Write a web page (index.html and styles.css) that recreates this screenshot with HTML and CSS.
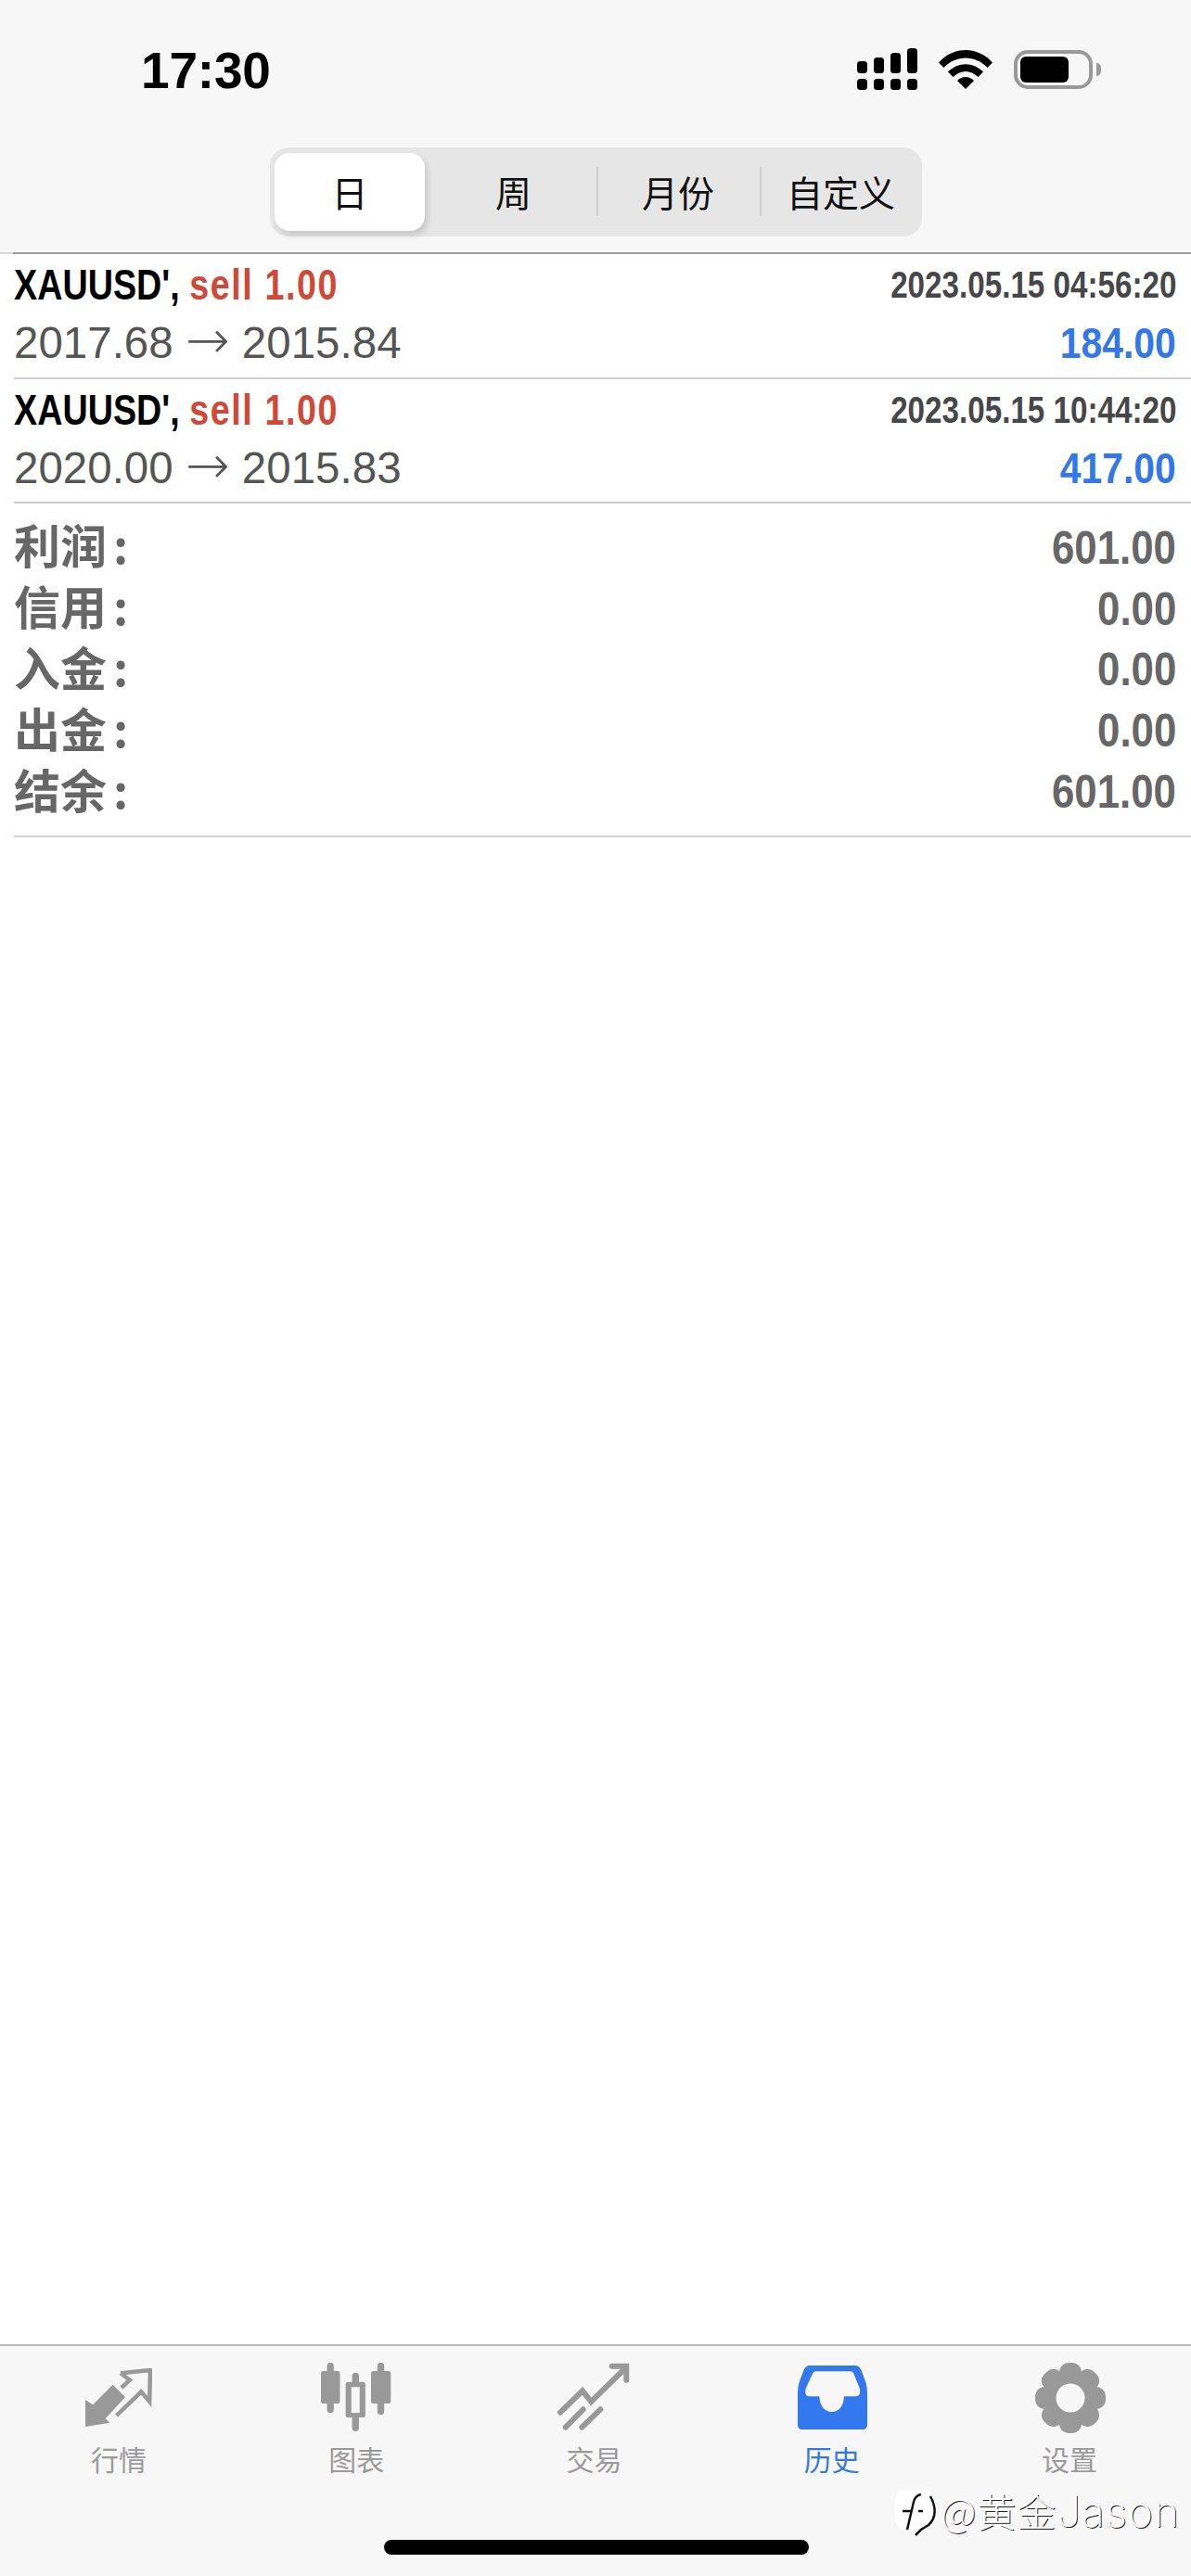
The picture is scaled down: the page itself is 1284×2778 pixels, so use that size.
FILE: index.html
```html
<!DOCTYPE html>
<html lang="zh-CN">
<head>
<meta charset="utf-8">
<title>历史</title>
<link rel="stylesheet" href="styles.css">
</head>
<body>
<div class="screen">
  <header class="top">
    <div class="status">
      <span class="clock">17:30</span>
      <div class="status-icons">
        <svg class="sig" width="66" height="46" viewBox="0 0 66 46">
          <g fill="#000">
            <rect x="0" y="14" width="11" height="13" rx="3.5"/>
            <rect x="18" y="10" width="11" height="17" rx="3.5"/>
            <rect x="36" y="5" width="11" height="22" rx="3.5"/>
            <rect x="54" y="0" width="11" height="27" rx="3.5"/>
            <rect x="0" y="33" width="11" height="12" rx="3.5"/>
            <rect x="18" y="33" width="11" height="12" rx="3.5"/>
            <rect x="36" y="33" width="11" height="12" rx="3.5"/>
            <rect x="54" y="33" width="11" height="12" rx="3.5"/>
          </g>
        </svg>
        <svg class="wifi" width="58" height="42" viewBox="0 0 58 42">
          <path d="M0 13.500C16-4.500 42-4.500 58 13.500L52.500 19C39.500 5 18.500 5 5.500 19Z"/>
          <path d="M10 23.500C21 12.500 37 12.500 48 23.500L42.500 29C34 21 24 21 15.500 29Z"/>
          <path d="M20 33C25.500 27.500 32.500 27.500 38 33L29 42Z"/>
        </svg>
        <div class="battery"><div class="cell"></div></div>
        <div class="nub"></div>
      </div>
    </div>
    <nav class="segments">
      <div class="seg seg-on">日</div>
      <div class="seg">周</div>
      <div class="seg seg-rule">月份</div>
      <div class="seg seg-rule">自定义</div>
    </nav>
  </header>

  <main class="content">
    <section class="deal">
      <div class="line">
        <div class="pair">XAUUSD', <span class="sell">sell 1.00</span></div>
        <div class="stamp">2023.05.15 04:56:20</div>
      </div>
      <div class="line line-b">
        <div class="prices">2017.68 <span class="arrow">→</span> 2015.84</div>
        <div class="profit">184.00</div>
      </div>
    </section>
    <section class="deal">
      <div class="line">
        <div class="pair">XAUUSD', <span class="sell">sell 1.00</span></div>
        <div class="stamp">2023.05.15 10:44:20</div>
      </div>
      <div class="line line-b">
        <div class="prices">2020.00 <span class="arrow">→</span> 2015.83</div>
        <div class="profit">417.00</div>
      </div>
    </section>
    <section class="totals">
      <div class="total"><span class="t-name">利润<span class="t-colon">:</span></span><span class="t-val">601.00</span></div>
      <div class="total"><span class="t-name">信用<span class="t-colon">:</span></span><span class="t-val">0.00</span></div>
      <div class="total"><span class="t-name">入金<span class="t-colon">:</span></span><span class="t-val">0.00</span></div>
      <div class="total"><span class="t-name">出金<span class="t-colon">:</span></span><span class="t-val">0.00</span></div>
      <div class="total"><span class="t-name">结余<span class="t-colon">:</span></span><span class="t-val">601.00</span></div>
    </section>
  </main>

  <footer class="tabs">
    <div class="tab tab-quotes">
      <svg class="ico" width="72" height="64" viewBox="0 0 72 64">
        <path class="thin" d="M38 5.300L70 2L69.200 36L60.200 25.300L33.600 51"/>
        <path class="thin" d="M38 5.300L47.900 12.700L38.900 21"/>
        <path d="M0 34V63L26.600 58.700L21.700 54.300L43 31L29.500 17.700L8.200 39.300Z"/>
      </svg>
      <span class="cap">行情</span>
    </div>
    <div class="tab">
      <svg class="ico" width="76" height="74" viewBox="0 0 76 74">
        <path d="M6.500 3.500a3.700 3.700 0 0 1 7.400 0V9H18a2.500 2.500 0 0 1 2.500 2.500v30A2.500 2.500 0 0 1 18 44h-4.100v6.500a3.700 3.700 0 0 1-7.400 0V44H2.500A2.500 2.500 0 0 1 0 41.500v-30A2.500 2.500 0 0 1 2.500 9h4z"/>
        <path fill-rule="evenodd" d="M33.600 14.400a3.700 3.700 0 0 1 7.400 0v6.300h4.400a2.500 2.500 0 0 1 2.500 2.500v33.300a2.500 2.500 0 0 1-2.500 2.500H41v11.300a3.700 3.700 0 0 1-7.400 0V59h-4.500a2.500 2.500 0 0 1-2.500-2.500V23.200a2.500 2.500 0 0 1 2.500-2.500h4.500zM32.800 26.300V54h9V26.300z"/>
        <path d="M60.800 3.500a3.700 3.700 0 0 1 7.400 0V9h4.600a2.500 2.500 0 0 1 2.500 2.500v30a2.500 2.500 0 0 1-2.500 2.500h-4.600v8.500a3.700 3.700 0 0 1-7.400 0V44h-4.300a2.500 2.500 0 0 1-2.500-2.500v-30A2.500 2.500 0 0 1 56.500 9h4.300z"/>
      </svg>
      <span class="cap">图表</span>
    </div>
    <div class="tab">
      <svg class="ico" width="80" height="74" viewBox="0 0 80 74">
        <path class="thick" d="M4 53.700L28 30.300L37.300 42L73 7"/>
        <path class="thick" d="M59.700 3.700H75.300V18.700"/>
        <path class="thick" d="M9.700 69.700L28.700 50.300"/>
        <path class="thick" d="M27.300 69.700L47.300 50.300"/>
      </svg>
      <span class="cap">交易</span>
    </div>
    <div class="tab tab-on">
      <svg class="ico nudge" width="76" height="70" viewBox="0 0 76 70">
        <path fill-rule="evenodd" d="M13 0H62C65 0 67 1.500 68.500 5L73 17C74.500 21 75 26 75 31V64C75 67 73 69 70 69H5C2 69 0 67 0 64V31C0 26 .5 21 2 17L6.500 5C8 1.500 10 0 13 0ZM20 6.300C18 6.300 17 7 16 9L9 24C7.500 28 8 33.300 12.500 33.300H23.300C24 44 29 50 36.700 50C44.500 50 49.500 44 50 33.300H63C67 33.300 68 28 66.500 24L60.500 9C59.500 7 58.500 6.300 56.500 6.300Z"/>
      </svg>
      <span class="cap">历史</span>
    </div>
    <div class="tab">
      <svg class="ico nudge" width="76" height="76" viewBox="0 0 76 76">
        <g>
          <circle cx="38" cy="38" r="30.500"/>
          <rect x="26" y="0" width="24" height="76" rx="10"/>
          <rect x="26" y="0" width="24" height="76" rx="10" transform="rotate(45 38 38)"/>
          <rect x="26" y="0" width="24" height="76" rx="10" transform="rotate(90 38 38)"/>
          <rect x="26" y="0" width="24" height="76" rx="10" transform="rotate(135 38 38)"/>
          <circle class="hole" cx="38" cy="38" r="15.500"/>
        </g>
      </svg>
      <span class="cap">设置</span>
    </div>

    <div class="mark">
      <svg class="mark-logo" width="48" height="54" viewBox="0 0 48 54">
        <path fill="#fff" d="M13 2H32C40 2 44 7 44 14V31C44 40 38 45 29 45H14C6 45 2 40 2 31V14C2 7 6 2 13 2Z"/>
        <path class="mark-f" d="M30 7C25 8 23 11 22 15L15 45"/>
        <path class="mark-f" d="M10 25H20M27 25H32"/>
        <path class="mark-f" d="M40 9C46 20 47 32 38 40L30 45L24 51"/>
      </svg>
      <span class="mark-text">@黄金<span class="mark-latin">Jason</span></span>
    </div>
    <div class="home"></div>
  </footer>
</div>
</body>
</html>
```

FILE: styles.css
```css
* { box-sizing: border-box; }

html, body { margin: 0; padding: 0; }

body {
  width: 1284px;
  height: 2778px;
  overflow: hidden;
  background: #fff;
  font-family: "Liberation Sans", "Noto Sans CJK SC", sans-serif;
}

.screen {
  display: flex;
  flex-direction: column;
  height: 2778px;
}

/* top area: status bar and period switch */
.top {
  height: 274px;
  flex: none;
  background: #f7f7f7;
  border-bottom: 2px solid #9c9c9c;
  border-image: linear-gradient(to right, #d8d8d8 15px, #9c9c9c 15px) 1;
  padding-top: 46px;
}

.status {
  display: flex;
  justify-content: space-between;
  align-items: flex-start;
  padding: 0 97px 0 152px;
  height: 113px;
}

.clock {
  font-size: 55px;
  line-height: 60px;
  font-weight: 700;
  color: #000;
  letter-spacing: -0.2px;
}

.status-icons {
  display: flex;
  align-items: flex-start;
  margin-top: 6px;
}

.sig { margin: 0 22px 0 0; }

.wifi { margin: 2px 23px 0 0; }

.battery {
  width: 85px;
  height: 42px;
  margin-top: 2px;
  border: 4px solid #999;
  border-radius: 15px;
  padding: 3px;
}

.cell {
  width: 52px;
  height: 28px;
  background: #000;
  border-radius: 6px;
}

.nub {
  width: 5px;
  height: 14px;
  margin: 16px 0 0 4px;
  background: #999;
  border-radius: 0 7px 7px 0;
}

.segments {
  width: 703px;
  height: 96px;
  margin-left: 291px;
  padding: 6px 0 6px 5px;
  display: flex;
  background: #e6e6e7;
  border-radius: 20px;
  font-family: "Noto Sans CJK SC", sans-serif;
  align-items: stretch;
}

.seg {
  display: flex;
  align-items: center;
  justify-content: center;
  font-size: 39px;
  line-height: 80px;
  padding-bottom: 3px;
  color: #111;
  position: relative;
}

.seg-on {
  width: 162px;
  background: #fff;
  border-radius: 16px;
  box-shadow: 3px 5px 6px rgba(0, 0, 0, 0.13);
}

.seg:nth-child(2) { width: 185px; padding-left: 6px; }

.seg:nth-child(3) { width: 176px; }

.seg:nth-child(4) { width: 175px; }

/* short hairline between the two right segments */
.seg-rule::before {
  content: "";
  position: absolute;
  left: 0;
  top: 15px;
  height: 53px;
  width: 2px;
  background: #cfcfcf;
}

.content {
  flex: 1;
  padding-left: 15px;
  background: #fff;
  color: #555;
}

.deal {
  height: 134.5px;
  padding-right: 16px;
  border-bottom: 2px solid #cfcfcf;
}

.line {
  display: flex;
  justify-content: space-between;
  align-items: baseline;
  height: 66px;
  line-height: 66px;
}

.line-b { line-height: 60px; }

/* the app's condensed numerals: Arial metrics pulled in horizontally */
.pair,
.stamp,
.profit,
.t-val {
  display: inline-block;
  font-weight: 700;
  white-space: nowrap;
}

.pair {
  font-size: 46px;
  color: #000;
  transform: scaleX(0.82);
  transform-origin: left center;
}

.sell {
  color: #cd4a38;
  letter-spacing: 1.9px;
}

.stamp {
  font-size: 40px;
  color: #47474a;
  transform: translateY(-2px) scaleX(0.83);
  transform-origin: right center;
}

.prices {
  font-size: 47.500px;
  color: #555;
}

.arrow {
  font-family: "DejaVu Sans", sans-serif;
  font-weight: 200;
  font-size: 57px;
  line-height: 0;
}

.profit {
  font-size: 47px;
  color: #3478e6;
  transform: scaleX(0.87);
  transform-origin: right center;
}

.totals {
  padding: 15px 16px 14px 0;
  border-bottom: 2px solid #d4d4d4;
  color: #676767;
}

.total {
  display: flex;
  justify-content: space-between;
  align-items: center;
  height: 65.800px;
}

.t-name {
  font-family: "Noto Sans CJK SC", sans-serif;
  font-weight: 700;
  font-size: 50px;
  line-height: 62px;
  margin-top: -9px;
}

.t-colon {
  display: inline-block;
  margin-left: 7px;
}

.t-val {
  font-size: 50px;
  transform: scaleX(0.876);
  transform-origin: right center;
}

/* bottom tab bar */
.tabs {
  flex: none;
  height: 250px;
  position: relative;
  display: grid;
  grid-template-columns: repeat(5, 1fr);
  padding-right: 3px;
  background: #f7f7f7;
  border-top: 2px solid #b9b9b9;
  color: #999;
}

.tab {
  display: flex;
  flex-direction: column;
  align-items: center;
  height: 146px;
  padding-top: 18px;
  position: relative;
}

.tab-quotes { padding-top: 24px; }

.ico {
  fill: #999;
  display: block;
}

.nudge { margin-left: 3px; }

.cap {
  position: absolute;
  top: 103px;
  font-family: "Noto Sans CJK SC", sans-serif;
  font-size: 30px;
  line-height: 36px;
  color: #9a9a9a;
}

.thin {
  fill: none;
  stroke: #999;
  stroke-width: 4.500px;
}

.thick {
  fill: none;
  stroke: #999;
  stroke-width: 6px;
  stroke-linecap: round;
  stroke-linejoin: miter;
}

.tab-on { padding-top: 21px; }

.tab-on .ico { fill: #3478f0; }

.tab-on .cap { color: #3478e6; }

.hole { fill: #f7f7f7; }

/* author tag laid over the bar */
.mark {
  position: absolute;
  left: 963px;
  top: 153px;
  display: flex;
  align-items: flex-start;
  gap: 3px;
}

.mark-f {
  fill: none;
  stroke: #111;
  stroke-width: 2.500px;
}

.mark-text {
  font-family: "Noto Sans CJK SC", sans-serif;
  font-weight: 300;
  font-size: 42px;
  line-height: 48px;
  letter-spacing: 1px;
  color: #fff;
  text-shadow: 1px 1px 0 #222;
  white-space: nowrap;
}

.mark-latin {
  font-family: "Inter", sans-serif;
  font-weight: 200;
  font-size: 46px;
}

.home {
  position: absolute;
  left: 414px;
  top: 209px;
  width: 458px;
  height: 16px;
  border-radius: 8px;
  background: #000;
}
```
